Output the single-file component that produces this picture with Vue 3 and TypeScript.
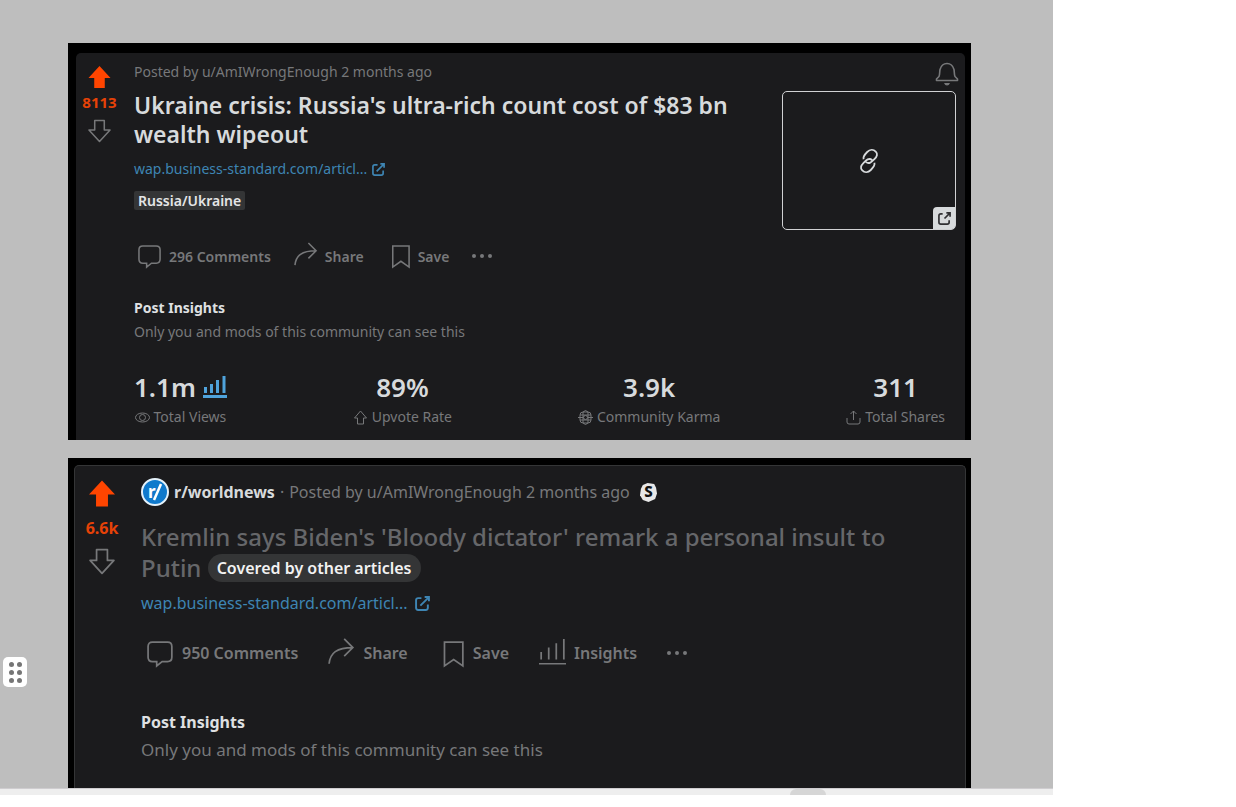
<script setup lang="ts">
interface Stat {
  value: string
  label: string
  icon: 'eye' | 'up' | 'karma' | 'share'
}

const stats: Stat[] = [
  { value: '1.1m', label: 'Total Views', icon: 'eye' },
  { value: '89%', label: 'Upvote Rate', icon: 'up' },
  { value: '3.9k', label: 'Community Karma', icon: 'karma' },
  { value: '311', label: 'Total Shares', icon: 'share' },
]

interface Action {
  label: string
  icon: 'comment' | 'share' | 'save' | 'chart'
}

const firstActions: Action[] = [
  { label: '296 Comments', icon: 'comment' },
  { label: 'Share', icon: 'share' },
  { label: 'Save', icon: 'save' },
]

const secondActions: Action[] = [
  { label: '950 Comments', icon: 'comment' },
  { label: 'Share', icon: 'share' },
  { label: 'Save', icon: 'save' },
  { label: 'Insights', icon: 'chart' },
]

const actionPaths: Record<Action['icon'], string> = {
  comment: 'M5 2H19Q23 2 23 6V16Q23 20 19 20H14L9 24V20H5Q1 20 1 16V6Q1 2 5 2Z',
  share: 'M1 22C2 12 8 7 23 7M15 -1L23 7L15 15',
  save: 'M6 2H23V24L14.500 18L6 24Z',
  chart: 'M2 11V18M9 7V18M16 3V18M23 -1V18M0 22H25',
}
</script>

<template>
  <div class="page">
    <main class="board">
      <div class="slides">
        <section class="panel panel-a">
          <article class="card card-a">
            <div class="votes">
              <button class="vote" aria-label="Upvote">
                <svg viewBox="0 0 24 24"><path class="filled" d="M12 0.500L23.500 13H17.500V23.500H6.500V13H0.500Z" /></svg>
              </button>
              <span class="score">8113</span>
              <button class="vote" aria-label="Downvote">
                <svg viewBox="0 0 24 24"><path class="line" d="M12 23L23 11H17V1H7V11H1Z" /></svg>
              </button>
            </div>
            <div class="content">
              <div class="top">
                <div class="text">
                  <p class="meta">Posted by u/AmIWrongEnough 2 months ago</p>
                  <h2 class="title">Ukraine crisis: Russia's ultra-rich count cost of $83 bn wealth wipeout</h2>
                  <a class="link" href="#">
                    wap.business-standard.com/articl...
                    <svg class="out" viewBox="0 0 14 14"><path d="M6 2H3Q1 2 1 4V11Q1 13 3 13H10Q12 13 12 11V8M5 9L13 1M9 1H13V5" /></svg>
                  </a>
                  <span class="flair">Russia/Ukraine</span>
                </div>
                <div class="side">
                  <button class="bell" aria-label="Follow post">
                    <svg viewBox="0 0 24 24"><path class="line" d="M1.500 18.500V17L4 14.500C5 12 4.500 10 5 7.500C6 4 8.500 1.500 12 1.500S18 4 19 7.500C19.500 10 19 12 20 14.500L22.500 17V18.500Z" /><path class="dot" d="M9 21H15Q14 23.500 12 23.500T9 21Z" /></svg>
                  </button>
                  <a class="thumb" href="#" aria-label="Open article">
                    <svg class="chain" viewBox="0 0 20 26"><path d="M4 11C3 8 6 5 8 3C11 0 15 0 17.500 2.500C20 5 19 8 16 11C13 14 10 17 6.500 14M16 15C17 18 14 21 12 23C9 26 5 26 2.500 23.500C0 21 1 18 4 15C7 12 10 9 13.500 12" /></svg>
                    <span class="corner">
                      <svg class="out" viewBox="0 0 14 14"><path d="M5 2H3Q1 2 1 4V11Q1 13 3 13H10Q12 13 12 11V9M7 7L13 1M9 1H13V5" /></svg>
                    </span>
                  </a>
                </div>
              </div>
              <div class="actions">
                <button v-for="a in firstActions" :key="a.label" class="action">
                  <svg viewBox="0 0 25 25"><path :d="actionPaths[a.icon]" /></svg>{{ a.label }}
                </button>
                <button class="more" aria-label="More"><i></i><i></i><i></i></button>
              </div>
              <h3 class="heading">Post Insights</h3>
              <p class="note">Only you and mods of this community can see this</p>
              <dl class="stats">
                <div v-for="s in stats" :key="s.label" class="stat">
                  <dd>
                    {{ s.value }}
                    <svg v-if="s.icon === 'eye'" class="bars" viewBox="0 0 24 22"><path d="M2.500 11V17M8.500 8V17M14.500 4V17M21 0V17M0 20.500H24" /></svg>
                  </dd>
                  <dt>
                    <svg viewBox="0 0 15 15">
                      <template v-if="s.icon === 'eye'"><ellipse cx="7.500" cy="7.500" rx="7" ry="4.500" /><circle cx="7.500" cy="7.500" r="3" /></template>
                      <path v-else-if="s.icon === 'up'" d="M7.500 1L13.500 8H10.500V14H4.500V8H1.500Z" />
                      <template v-else-if="s.icon === 'karma'"><rect x="2" y="2" width="11" height="11" rx="3" /><circle cx="7.500" cy="7.500" r="2" /><path d="M5 2Q7.500 -1 10 2M5 13Q7.500 16 10 13M2 5H13M2 10H13M5 2V13M10 2V13M0 7.500H5M10 7.500H15" /></template>
                      <path v-else d="M1 8V12Q1 14 3 14H12Q14 14 14 12V8M7.500 10V1M4.500 4L7.500 1L10.500 4" />
                    </svg>
                    {{ s.label }}
                  </dt>
                </div>
              </dl>
            </div>
          </article>
        </section>

        <section class="panel panel-b">
          <article class="card card-b">
            <div class="votes">
              <button class="vote" aria-label="Upvote">
                <svg viewBox="0 0 24 24"><path class="filled" d="M12 0L24 13H17.500V24H6.500V13H0Z" /></svg>
              </button>
              <span class="score">6.6k</span>
              <button class="vote" aria-label="Downvote">
                <svg viewBox="0 0 24 24"><path class="line" d="M12 23L23 11H17V1H7V11H1Z" /></svg>
              </button>
            </div>
            <div class="content">
              <p class="meta">
                <svg class="avatar" viewBox="0 0 28 28"><circle cx="14" cy="14" r="13" /><text x="7" y="20">r</text><path d="M13 22L20 6" /></svg>
                <a class="sub" href="#">r/worldnews</a>
                <span>·</span>
                <span>Posted by u/AmIWrongEnough 2 months ago</span>
                <svg class="award" viewBox="0 0 18 20"><path d="M3 2L8 0L15 1L17 5L18 11L16 17L9 20L3 18L0 13L1 6Z" /><text x="9" y="15">S</text></svg>
              </p>
              <h2 class="title">
                Kremlin says Biden's 'Bloody dictator' remark a personal insult to Putin
                <span class="pill">Covered by other articles</span>
              </h2>
              <a class="link" href="#">
                wap.business-standard.com/articl...
                <svg class="out" viewBox="0 0 14 14"><path d="M6 2H3Q1 2 1 4V11Q1 13 3 13H10Q12 13 12 11V8M5 9L13 1M9 1H13V5" /></svg>
              </a>
              <div class="actions">
                <button v-for="a in secondActions" :key="a.label" class="action">
                  <svg viewBox="0 0 25 25"><path :d="actionPaths[a.icon]" /></svg>{{ a.label }}
                </button>
                <button class="more" aria-label="More"><i></i><i></i><i></i></button>
              </div>
              <h3 class="heading">Post Insights</h3>
              <p class="note">Only you and mods of this community can see this</p>
            </div>
          </article>
        </section>
        <button class="grip" aria-label="Drag">
          <i v-for="n in 6" :key="n"></i>
        </button>
      </div>
      <div class="track"><div class="knob"></div></div>
    </main>
  </div>
</template>

<style>
body {
  margin: 0;
  background: #fff;
}
</style>

<style scoped>
.page {
  padding-right: 183px;
  font-family: "Noto Sans", "Open Sans", sans-serif;
}
.slides {
  position: relative;
  display: flex;
  flex-direction: column;
  gap: 18px;
  padding: 43px 82px 0 68px;
  background: #bebebe;
}
p, h2, h3, dl, dd { margin: 0; }
button {
  display: flex;
  padding: 0;
  border: 0;
  background: none;
  color: inherit;
  font: inherit;
  cursor: pointer;
}
svg {
  display: block;
  flex: none;
  fill: none;
  overflow: visible;
}
a { text-decoration: none; }
.panel { background: #000; }
.panel-a { padding: 10px 6px 0 8px; }
.panel-b { padding: 7px 5px 0 6px; }
.card {
  display: flex;
  background: #1b1b1d;
  color: #77787a;
}
.card-a { border-radius: 5px 5px 0 0; }
.card-b {
  border: 1px solid #343536;
  border-bottom: 0;
  border-radius: 5px 5px 0 0;
}
.votes {
  display: flex;
  flex-direction: column;
  align-items: center;
  flex: none;
}
.card-a .votes { width: 47px; padding-top: 12px; margin-right: 11px; }
.card-b .votes { width: 54px; padding-top: 14px; margin-right: 12px; }
.card-a .vote svg { width: 23px; height: 24px; }
.card-b .vote svg { width: 26px; height: 27px; }
.filled { fill: #ff4500; }
.line { stroke: #77787a; stroke-width: 1.6; stroke-linejoin: round; }
.score { color: #e64207; font-weight: 700; }
.card-a .score { font-size: 15px; line-height: 18px; margin: 4px 0 8px; }
.card-b .score { font-size: 16px; line-height: 20px; margin: 11px 0 10px; }
.content { flex: 1; min-width: 0; }
.card-a .content { padding: 9px 6px 14px 0; }
.card-b .content { padding: 12px 60px 28px 0; }
.top { display: flex; justify-content: space-between; }
.text { flex: 1; max-width: 620px; padding-top: 2px; }
.card-a .meta { font-size: 14px; line-height: 16px; }
.card-b .meta {
  display: flex;
  align-items: center;
  gap: 5px;
  font-size: 16px;
  line-height: 28px;
}
.avatar { width: 28px; height: 28px; }
.avatar circle { fill: #0f79cc; stroke: #e4f1fa; stroke-width: 2; }
.avatar text { fill: #fff; font-size: 17px; font-weight: 700; }
.avatar path { stroke: #fff; stroke-width: 2.500; }
.award { width: 17px; height: 19px; margin-left: 5px; }
.award path { fill: #e8e8e8; }
.award text { fill: #111; font-size: 16px; font-weight: 800; text-anchor: middle; }
.sub { color: #d7dadc; font-weight: 700; }
.card-a .title {
  margin-top: 11px;
  color: #d7dadc;
  font-size: 23px;
  font-weight: 600;
  line-height: 29px;
}
.card-b .title {
  margin-top: 15px;
  color: #66676a;
  font-size: 24px;
  font-weight: 500;
  line-height: 31px;
}
.pill {
  display: inline-block;
  margin-top: 2px;
  padding: 0 9px;
  border-radius: 14px;
  background: #343536;
  color: #f2f2f2;
  font-size: 16px;
  font-weight: 600;
  line-height: 28px;
  vertical-align: top;
}
.link { display: flex; align-items: center; gap: 5px; color: #3e85b3; }
.card-a .link { font-size: 14px; line-height: 18px; margin-top: 11px; }
.card-b .link { gap: 7px; font-size: 16px; line-height: 20px; margin-top: 10px; }
.out { width: 13px; height: 13px; stroke: currentColor; stroke-width: 1.800; }
.card-b .link .out { width: 15px; height: 15px; }
.flair {
  display: inline-block;
  margin-top: 13px;
  padding: 0 4px;
  border-radius: 2px;
  background: #343536;
  color: #e4e5e6;
  font-size: 14px;
  font-weight: 600;
  line-height: 19px;
}
.side { display: flex; flex-direction: column; align-items: flex-end; }
.bell svg { width: 24px; height: 24px; }
.dot { fill: #77787a; }
.thumb {
  display: grid;
  place-items: center;
  position: relative;
  box-sizing: border-box;
  width: 174px;
  height: 139px;
  margin: 5px 3px 1px 0;
  border: 1px solid #d0d1d3;
  border-radius: 5px;
  color: #d7dadc;
}
.chain { width: 18px; height: 24px; stroke: currentColor; stroke-width: 2; }
.corner {
  display: grid;
  place-items: center;
  position: absolute;
  right: 0;
  bottom: 0;
  width: 22px;
  height: 22px;
  border-radius: 4px 0 3px 0;
  background: #d7dadc;
  color: #303033;
}
.actions { display: flex; align-items: center; height: 26px; font-weight: 600; }
.action { align-items: center; }
.action svg, .bars { stroke: currentColor; }
.action svg { stroke-width: 1.600; }
.card-a .actions { gap: 23px; padding-left: 4px; margin-top: 12px; font-size: 14px; }
.card-b .actions { gap: 30px; padding-left: 6px; margin-top: 27px; font-size: 16px; }
.card-a .action { gap: 7px; }
.card-b .action { gap: 8px; }
.card-a .action svg { width: 24px; height: 24px; }
.card-b .action svg { width: 27px; height: 27px; }
.more { gap: 4px; padding: 8px 0; }
.more i { width: 4px; height: 4px; border-radius: 50%; background: currentColor; }
.heading { color: #dfe0e2; font-weight: 700; }
.card-a .heading { font-size: 14px; line-height: 18px; margin-top: 30px; }
.card-b .heading { font-size: 16px; line-height: 20px; margin-top: 46px; }
.card-a .note { font-size: 14px; line-height: 18px; margin-top: 6px; }
.card-b .note { font-size: 17px; line-height: 20px; margin-top: 8px; }
.stats { display: flex; justify-content: space-between; margin: 31px 14px 0 0; }
.stat { display: flex; flex-direction: column; align-items: center; }
.stat dd {
  display: flex;
  align-items: center;
  gap: 7px;
  color: #d7dadc;
  font-size: 26px;
  font-weight: 600;
  line-height: 30px;
}
.stat dt {
  display: flex;
  align-items: center;
  gap: 4px;
  margin-top: 6px;
  font-size: 14px;
  line-height: 18px;
}
.stat dt svg { width: 15px; height: 15px; stroke: currentColor; }
.stat .bars { width: 24px; height: 22px; color: #4fa3dc; stroke-width: 3; }
.grip {
  display: grid;
  grid-template-columns: 5px 5px;
  place-content: center;
  gap: 3px;
  position: absolute;
  left: 3px;
  bottom: 101px;
  width: 24px;
  height: 30px;
  border-radius: 5px;
  background: #fff;
}
.grip i { width: 5px; height: 5px; border-radius: 50%; background: #757575; }
.track {
  box-sizing: border-box;
  height: 7px;
  padding-left: 75%;
  border-top: 1px solid #cfcdd0;
  background: #eee;
}
.knob { width: 36px; height: 6px; border-radius: 6px 6px 0 0; background: #d6d6d6; }
</style>
